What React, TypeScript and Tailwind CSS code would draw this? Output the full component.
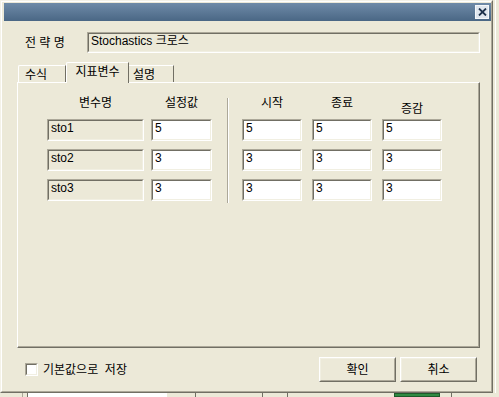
import React from 'react';

const font = { fontFamily: '"Liberation Sans", "Noto Sans CJK KR", sans-serif' };

function Sunken({ value, className }: { value?: string; className: string }) {
  return (
    <div className={`border border-t-[#aca899] border-l-[#aca899] border-r-white border-b-white ${className}`}>
      <div className="h-full border border-t-[#716f64] border-l-[#716f64] border-r-[#f1efe2] border-b-[#f1efe2] pl-[2px] text-[12px] leading-[14px] text-black">
        {value}
      </div>
    </div>
  );
}

function Button({ label }: { label: string }) {
  return (
    <div className="w-[77px] h-[25px] border border-t-white border-l-white border-r-[#716f64] border-b-[#716f64]">
      <div className="h-full flex items-center justify-center border border-t-[#f1efe2] border-l-[#f1efe2] border-r-[#aca899] border-b-[#aca899] text-[12px] text-black">
        {label}
      </div>
    </div>
  );
}

const rows = [
  { name: 'sto1', value: '5', start: '5', end: '5', step: '5' },
  { name: 'sto2', value: '3', start: '3', end: '3', step: '3' },
  { name: 'sto3', value: '3', start: '3', end: '3', step: '3' },
];

export default function App() {
  return (
    <div className="w-[499px] h-[397px] bg-[#ece9d8] flex flex-col overflow-hidden" style={font}>
      <div className="flex">
        {/* dialog */}
        <div className="w-[493px] h-[393px] border border-t-[#f4f2e8] border-l-[#f4f2e8] border-r-[#716f64] border-b-[#716f64]">
          <div className="h-full border border-t-white border-l-white border-r-[#aca899] border-b-[#aca899] pl-[2px] pt-[1px] flex flex-col">
            {/* title bar */}
            <div className="h-[18px] flex items-center bg-gradient-to-b from-[#6f8ba8] to-[#4a6785]">
              <div className="ml-auto mr-[2px] w-[14px] h-[14px] bg-[#dfe6ee] border border-[#f4f7fa] flex items-center justify-center">
                <svg width="9" height="8" viewBox="0 0 9 8">
                  <path d="M1 0.5 L8 7.5 M8 0.5 L1 7.5" stroke="#1e324c" strokeWidth="1.8" />
                </svg>
              </div>
            </div>

            <div className="ml-[13px] w-[463px] flex flex-col">
              {/* strategy name */}
              <div className="mt-[11px] h-[21px] flex items-center">
                <div className="w-[70px] pl-[8px] text-[12px] text-black">전 략 명</div>
                <Sunken value="Stochastics 크로스" className="flex-1 h-[21px] bg-[#ece9d8]" />
              </div>

              {/* tabs */}
              <div className="mt-[9px] h-[20px] flex items-end">
                <div className="ml-[1px] w-[48px] h-[17px] border-t border-l border-white rounded-tl-[2px] border-r border-r-[#716f64] pl-[6px] pt-[2px] text-[12px] leading-[14px] text-black">
                  수식
                </div>
                <div className="relative z-10 -mb-[1px] w-[63px] h-[21px] bg-[#ece9d8] border-t border-l border-white rounded-tl-[2px] border-r border-r-[#716f64] flex justify-center pt-[2px] text-[12px] leading-[14px] text-black">
                  지표변수
                </div>
                <div className="w-[45px] h-[17px] border-t border-white border-r border-r-[#716f64] pl-[4px] pt-[2px] text-[12px] leading-[14px] text-black">
                  설명
                </div>
              </div>

              {/* panel */}
              <div className="h-[266px] border border-t-white border-l-white border-r-[#716f64] border-b-[#716f64]">
                <div className="h-full border-r border-b border-[#aca899] pt-[13px] pl-[29px] flex items-start">
                  <div className="w-[97px] flex flex-col">
                    <div className="h-[23px] text-center text-[12px] leading-[14px] text-black">변수명</div>
                    <div className="flex flex-col gap-[8px]">
                      {rows.map((r) => (
                        <Sunken key={r.name} value={r.name} className="h-[22px] bg-[#ece9d8]" />
                      ))}
                    </div>
                  </div>
                  <div className="ml-[7px] w-[61px] flex flex-col">
                    <div className="h-[23px] text-center text-[12px] leading-[14px] text-black">설정값</div>
                    <div className="flex flex-col gap-[8px]">
                      {rows.map((r) => (
                        <Sunken key={r.name} value={r.value} className="h-[22px] bg-white" />
                      ))}
                    </div>
                  </div>

                  <div className="ml-[15px] mt-[2px] w-[2px] h-[105px] border-l border-l-[#aca899] border-r border-r-white" />

                  <div className="ml-[13px] w-[60px] flex flex-col">
                    <div className="h-[23px] text-center text-[12px] leading-[14px] text-black">시작</div>
                    <div className="flex flex-col gap-[8px]">
                      {rows.map((r) => (
                        <Sunken key={r.name} value={r.start} className="h-[22px] bg-white" />
                      ))}
                    </div>
                  </div>
                  <div className="ml-[10px] w-[60px] flex flex-col">
                    <div className="h-[23px] text-center text-[12px] leading-[14px] text-black">종료</div>
                    <div className="flex flex-col gap-[8px]">
                      {rows.map((r) => (
                        <Sunken key={r.name} value={r.end} className="h-[22px] bg-white" />
                      ))}
                    </div>
                  </div>
                  <div className="ml-[10px] w-[60px] flex flex-col">
                    <div className="h-[23px] pt-[6px] text-center text-[12px] leading-[14px] text-black">증감</div>
                    <div className="flex flex-col gap-[8px]">
                      {rows.map((r) => (
                        <Sunken key={r.name} value={r.step} className="h-[22px] bg-white" />
                      ))}
                    </div>
                  </div>
                </div>
              </div>

              {/* footer */}
              <div className="mt-[9px] h-[25px] flex items-center">
                <div className="ml-[8px] w-[13px] h-[13px] border border-t-[#aca899] border-l-[#aca899] border-r-white border-b-white">
                  <div className="h-full border border-t-[#716f64] border-l-[#716f64] border-r-[#f1efe2] border-b-[#f1efe2] bg-white" />
                </div>
                <div className="ml-[5px] text-[12px] text-black">기본값으로&nbsp; 저장</div>
                <div className="ml-auto mr-[3px] flex gap-[4px]">
                  <Button label="확인" />
                  <Button label="취소" />
                </div>
              </div>
            </div>
          </div>
        </div>
        {/* window behind, right side */}
        <div className="flex-1 border-l-2 border-[#ece9d8]">
          <div className="h-full w-[1px] bg-white" />
        </div>
      </div>

      {/* window behind, bottom strip */}
      <div className="h-[4px] flex items-start overflow-hidden">
        <div className="ml-[22px] w-[5px] h-full border-l border-[#aca899]" />
        <div className="w-[140px] h-full bg-white border-l border-[#716f64]" />
        <div className="w-[28px] h-full" />
        <div className="w-[67px] h-full border-l border-[#716f64]" />
        <div className="w-[25px] h-full border-l border-[#716f64]" />
        <div className="w-[107px] h-full border-l border-[#716f64]" />
        <div className="w-[46px] h-full bg-[#2f8a42] border border-[#1d5a2a]" />
        <div className="ml-[11px] w-[1px] h-full bg-[#716f64]" />
      </div>
    </div>
  );
}
